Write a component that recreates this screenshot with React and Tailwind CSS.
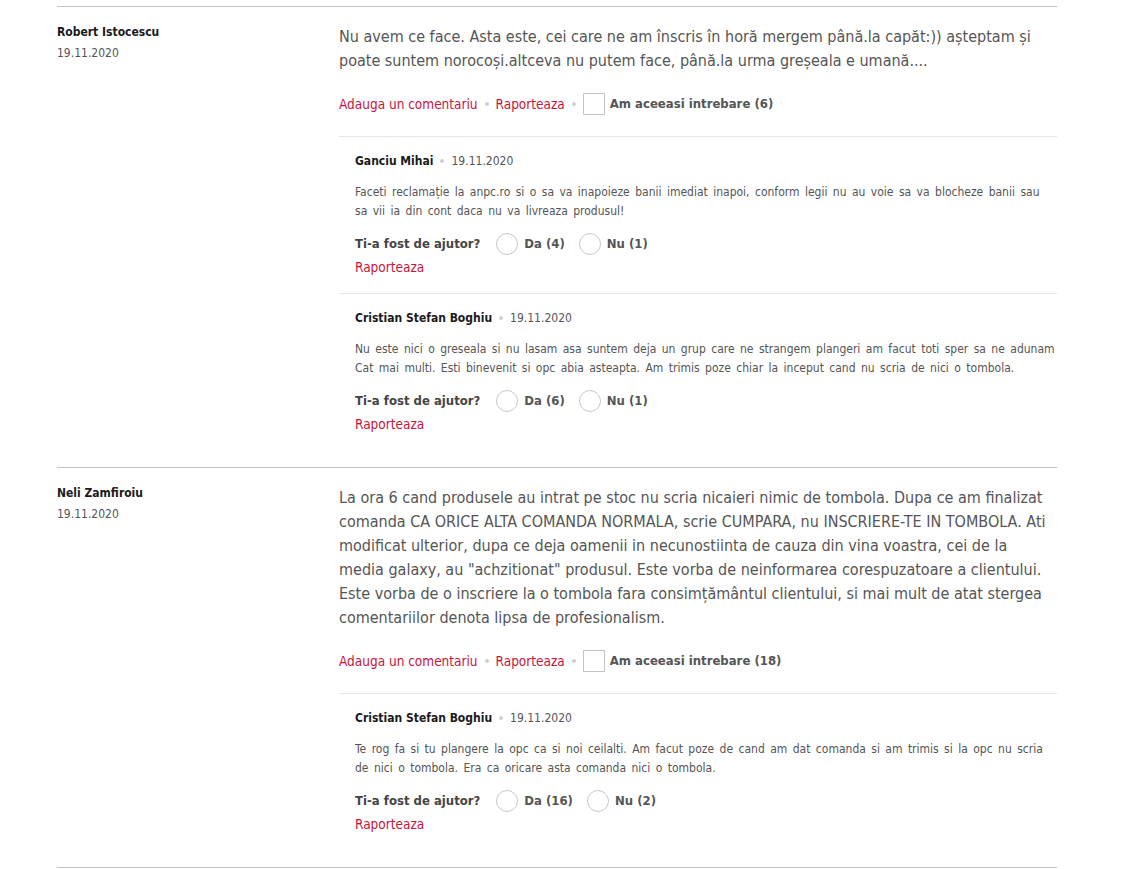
import React from "react";

const FONT = "font-['DejaVu_Sans_Condensed','DejaVu_Sans',sans-serif] font-stretch-condensed";

function Dot() {
  return <span className="inline-block w-[4px] h-[4px] rounded-full bg-[#cfcfcf] mx-[7px] shrink-0" />;
}

function Radio({ label }) {
  return (
    <label className="flex items-center gap-[6px]">
      <span className="w-[22px] h-[22px] rounded-full border border-[#c8c8c8] bg-white shrink-0" />
      <span className="font-bold text-[13px] text-[#555]">{label}</span>
    </label>
  );
}

function Answer({ name, date, text, da, nu, last }) {
  return (
    <div className={`border-t border-[#e6e6e6] pl-[16px] pt-[15px] ${last ? "pb-[33px]" : "pb-[16px]"}`}>
      <div className="flex items-center h-[18px] text-[12px]">
        <span className="font-bold text-[#1a1a1a]">{name}</span>
        <Dot />
        <span className="text-[#555]">{date}</span>
      </div>
      <p className="mt-[13px] text-[12px] leading-[19px] [word-spacing:2px] text-[#555]">{text}</p>
      <div className="mt-[12px] flex items-center h-[22px]">
        <span className="font-bold text-[13px] text-[#444] mr-[16px]">Ti-a fost de ajutor?</span>
        <div className="flex items-center gap-[14px]">
          <Radio label={`Da (${da})`} />
          <Radio label={`Nu (${nu})`} />
        </div>
      </div>
      <div className="mt-[2px] h-[20px] flex items-center">
        <a className="text-[13.5px] text-[#c8143c]">Raporteaza</a>
      </div>
    </div>
  );
}

function Question({ name, date, text, same, answers }) {
  return (
    <div className="border-t border-[#c4c4c4] flex">
      <div className="w-[282px] shrink-0 pt-[15px]">
        <div className="font-bold text-[12px] leading-[20px] text-[#1a1a1a]">{name}</div>
        <div className="mt-[2px] text-[12px] leading-[18px] text-[#555]">{date}</div>
      </div>
      <div className="flex-1 pt-[18px]">
        <p className="w-[708px] text-[16px] leading-[24px] text-[#555]">{text}</p>
        <div className="mt-[20px] flex items-center h-[22px] text-[13.5px]">
          <a className="text-[#c8143c]">Adauga un comentariu</a>
          <Dot />
          <a className="text-[#c8143c]">Raporteaza</a>
          <Dot />
          <span className="w-[22px] h-[22px] border border-[#c4c4c4] bg-white shrink-0" />
          <span className="ml-[5px] font-bold text-[13px] text-[#555]">Am aceeasi intrebare ({same})</span>
        </div>
        <div className="mt-[21px]">
          {answers.map((a, i) => (
            <Answer key={i} {...a} last={i === answers.length - 1} />
          ))}
        </div>
      </div>
    </div>
  );
}

export default function App() {
  return (
    <div className={`w-[1145px] min-h-[869px] bg-white pt-[6px] ${FONT}`}>
      <div className="ml-[57px] w-[1000px]">
        <Question
          name="Robert Istocescu"
          date="19.11.2020"
          same={6}
          text="Nu avem ce face. Asta este, cei care ne am înscris în horă mergem până.la capăt:)) așteptam și poate suntem norocoși.altceva nu putem face, până.la urma greșeala e umană...."
          answers={[
            {
              name: "Ganciu Mihai",
              date: "19.11.2020",
              text: "Faceti reclamație la anpc.ro si o sa va inapoieze banii imediat inapoi, conform legii nu au voie sa va blocheze banii sau sa vii ia din cont daca nu va livreaza produsul!",
              da: 4,
              nu: 1,
            },
            {
              name: "Cristian Stefan Boghiu",
              date: "19.11.2020",
              text: "Nu este nici o greseala si nu lasam asa suntem deja un grup care ne strangem plangeri am facut toti sper sa ne adunam Cat mai multi. Esti binevenit si opc abia asteapta. Am trimis poze chiar la inceput cand nu scria de nici o tombola.",
              da: 6,
              nu: 1,
            },
          ]}
        />
        <Question
          name="Neli Zamfiroiu"
          date="19.11.2020"
          same={18}
          text={'La ora 6 cand produsele au intrat pe stoc nu scria nicaieri nimic de tombola. Dupa ce am finalizat comanda CA ORICE ALTA COMANDA NORMALA, scrie CUMPARA, nu INSCRIERE-TE IN TOMBOLA. Ati modificat ulterior, dupa ce deja oamenii in necunostiinta de cauza din vina voastra, cei de la media galaxy, au "achzitionat" produsul. Este vorba de neinformarea corespuzatoare a clientului. Este vorba de o inscriere la o tombola fara consimțământul clientului, si mai mult de atat stergea comentariilor denota lipsa de profesionalism.'}
          answers={[
            {
              name: "Cristian Stefan Boghiu",
              date: "19.11.2020",
              text: "Te rog fa si tu plangere la opc ca si noi ceilalti. Am facut poze de cand am dat comanda si am trimis si la opc nu scria de nici o tombola. Era ca oricare asta comanda nici o tombola.",
              da: 16,
              nu: 2,
            },
          ]}
        />
        <div className="border-t border-[#c4c4c4]" />
      </div>
    </div>
  );
}
